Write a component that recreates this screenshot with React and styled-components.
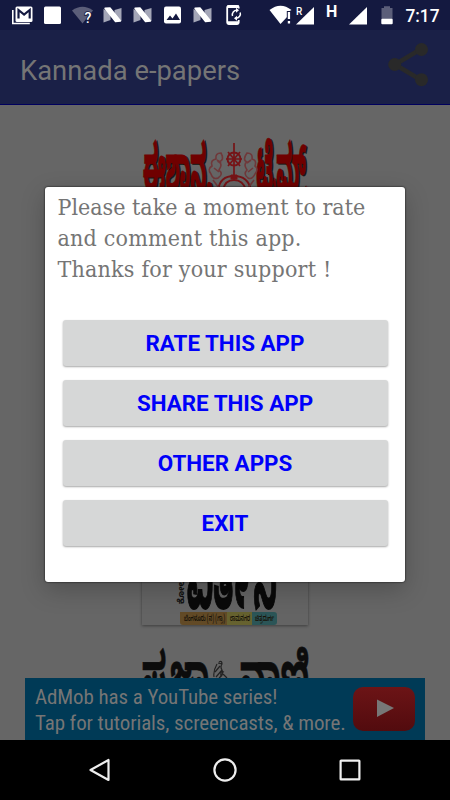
import React from 'react'
import styled, { createGlobalStyle } from 'styled-components';

const GlobalStyle = createGlobalStyle`
    * {
      box-sizing:border-box;
    }
    body {
      margin:0;
      background:#000;
      overflow:hidden;
    }
`

const actions = ['Rate this app', 'Share this app', 'Other apps', 'Exit']

function StatusBar() {
  return (
    <Status>
      <svg width="450" height="30" viewBox="0 0 450 30">
        <path d="M12.800 10v13.500h17" fill="none" stroke="#fff" strokeWidth="1.6" />
        <rect x="15.500" y="6.500" width="17" height="15.500" rx="1.500" fill="#fff" />
        <path d="M18.500 18.500v-8.500l5.600 4.500 5.600-4.500v8.500" fill="none" stroke="#141940" strokeWidth="2.200" />
        <rect x="44" y="6.500" width="17" height="17.500" rx="1.500" fill="#fff" />
        <path d="M72 10.500q10.500-7.500 21 0L82.500 23.500z" fill="#5b5e79" />
        <text x="84.500" y="22.800" fontFamily="Roboto" fontSize="14" fontWeight="500" fill="#fff" stroke="#141940" strokeWidth="1.600" paintOrder="stroke">?</text>
        {[103, 133, 193].map(x => (
          <g key={x} transform={`translate(${x} 7)`}>
            <path d="M0.500 2l7 4v7l-7 2.500zM11.500 3l7-2v13l-7-3z" fill="#a4a6b7" />
            <path d="M2 1.200l5-0.200 10.500 13-5 0.500z" fill="#fff" stroke="#fff" strokeWidth="1.400" strokeLinejoin="round" />
          </g>
        ))}
        <rect x="164" y="6.500" width="17" height="17" rx="2" fill="#fff" />
        <path d="M166.500 20l3.500-4.500 2.500 3 3.500-5 4 6.500z" fill="#141940" />
        <rect x="227.200" y="6" width="11.500" height="18" rx="1.500" fill="none" stroke="#fff" strokeWidth="1.800" />
        <path d="M227 6.800h12M227 22.500h12" stroke="#fff" strokeWidth="2.500" />
        <rect x="235" y="8.500" width="6" height="11.500" fill="#141940" />
        <path d="M232.500 16a4.500 4.500 0 0 1 4.500-5.800M240.200 12.500a4.500 4.500 0 0 1-4.500 5.800" fill="none" stroke="#fff" strokeWidth="1.500" />
        <path d="M236 7.800l3 2.500-3 2.500zM237 15.800l-3 2.500 3 2.500z" fill="#fff" />
        <path d="M269.500 10q11-8.500 22 0l-3.500 2v4l-7.500 8z" fill="#fff" />
        <path d="M286.800 11h4v13h-4z" fill="#141940" />
        <path d="M287.800 12h2.300v7h-2.300zM287.800 21h2.300v2.600h-2.300z" fill="#fff" />
        <path d="M314 7v17.500h-18z" fill="#fff" />
        <path d="M295 5h8.500v11h-8.500z" fill="#141940" />
        <text x="296" y="14.800" fontFamily="Roboto" fontSize="10" fontWeight="500" fill="#fff">R</text>
        <path d="M367 7v17.500h-18z" fill="#fff" />
        <text x="326" y="17" fontFamily="Roboto" fontSize="16" fontWeight="700" fill="#fff">H</text>
        <path d="M384 6.300v1.700h-2.500v11h11v-11h-2.500v-1.700z" fill="#5b5e79" />
        <rect x="381.300" y="18.800" width="11.400" height="5.500" rx="1" fill="#fff" />
        <text x="405.500" y="22" fontFamily="Roboto" fontSize="19" fontWeight="500" fill="#fff" textLength="34" lengthAdjust="spacingAndGlyphs">7:17</text>
      </svg>
    </Status>
  )
}

function Emblem() {
  return (
    <g fill="none" stroke="#761417">
      <circle cx="234" cy="159" r="6.500" strokeWidth="2" />
      <path d="M234 143v32M226 159h16M228 152l12 14M240 152l-12 14" strokeWidth="1.700" />
      <path d="M231 175h6v4h-6z" fill="#761417" />
      <path d="M218 190q2-14 16-14t17 14M223 190q2-10 11-10t12 10" strokeWidth="1.800" />
      <g stroke="#70383a" strokeWidth="1.600">
        <path d="M221 153q-6 0-5 6-6 1-4 7-5 3-1 8 2 6 7 4 6-4 1-8 4-6 0-8 6-2 2-9zM214 168l5 4M217 160l4 3M213 180l6 8" />
        <path d="M247 153q6 0 5 6 5 1 3 7 4 3 0 8-3 6-7 4-5-4-1-8-4-6 0-8-5-2 0-9zM253 168l-5 4M251 160l-4 3M254 180l-6 8" />
      </g>
    </g>
  )
}

function Papers() {
  return (
    <Content>
      <svg width="450" height="573" viewBox="0 105 450 573">
        <g fontSize="46" fontWeight="700">
          {['#151515', '#700000'].map((color, i) => (
            <g key={color} fill={color} stroke={color} strokeWidth="0.6" transform={`translate(${1.500 - i * 1.500} ${1 - i}) translate(0 191) scale(1 1.42)`}>
              <Kannada x="143" y="0" textLength="69" lengthAdjust="spacingAndGlyphs">ಈಶಾನ್ಯ</Kannada>
              <Kannada x="256" y="0" textLength="51" lengthAdjust="spacingAndGlyphs">ಟೈಮ್ಸ್</Kannada>
            </g>
          ))}
        </g>
        <Emblem />

        <Card x="142" y="560" width="166" height="65" />
        <g transform="translate(187 608) scale(1 1.8)" fontSize="46" fontWeight="700" fill="#090909" stroke="#090909">
          <Kannada textLength="90" lengthAdjust="spacingAndGlyphs">ವಿತ೯ನಿ</Kannada>
        </g>
        <Kannada transform="translate(184 604) rotate(-90)" fontSize="9" fontWeight="700" fill="#111">ಕೋಲಾರ</Kannada>
        <path d="M180 612h47v13h-44q-3 0-3-3z" fill="#624a26" />
        <path d="M227 612h25v13h-25z" fill="#66622f" />
        <path d="M252 612h22q3 0 3 3v7q0 3-3 3h-22z" fill="#2b5557" />
        <g fontSize="8" fontWeight="600" fill="#171208">
          <Kannada x="184" y="621" textLength="41" lengthAdjust="spacingAndGlyphs">ಬೆಂಗಳೂರು (ನ) (ಗ್ರಾ)</Kannada>
          <Kannada x="230" y="621" textLength="20" lengthAdjust="spacingAndGlyphs">ರಾಮನಗರ</Kannada>
          <Kannada x="255" y="621" textLength="19" lengthAdjust="spacingAndGlyphs">ಚಿತ್ರದುರ್ಗ</Kannada>
        </g>

        <g transform="translate(0 696) scale(1 1.32)" fontSize="46" fontWeight="700" fill="#0c0c0c" stroke="#0c0c0c" strokeWidth="0.5">
          <Kannada x="142" y="0" textLength="67" lengthAdjust="spacingAndGlyphs">ಪ್ರಜಾ</Kannada>
          <Kannada x="240" y="0" textLength="69" lengthAdjust="spacingAndGlyphs">ವಾಣಿ</Kannada>
        </g>
        <path d="M219 662q3-2 3 2-2 3 0 6 2 5-3 8M217 664q-4 7-3 13M215 672l5-6M216 677l6-7M224 672q-4-2-3 5M223 674l4 4M218 663l4 1" fill="none" stroke="#222" strokeWidth="1.200" />
      </svg>
    </Content>
  )
}

function App() {
  return (
    <Phone>
      <GlobalStyle />
      <StatusBar />
      <Toolbar>
        <Title>Kannada e-papers</Title>
        <svg width="44" height="46" viewBox="0 0 44 46">
          <path d="M35 8L9 23.500 35 39" fill="none" stroke="#292929" strokeWidth="4.500" />
          <circle cx="35.500" cy="8.500" r="6.500" fill="#292929" />
          <circle cx="8.700" cy="23.500" r="6.500" fill="#292929" />
          <circle cx="35.500" cy="38.700" r="6.500" fill="#292929" />
        </svg>
      </Toolbar>
      <Papers />
      <Dialog>
        <Message>
          <Line>Please take a moment to rate</Line>
          <Line $spacing="0.19px">and comment this app.</Line>
          <Line $spacing="0.2px">Thanks for your support !</Line>
        </Message>
        <ButtonGroup>
          {actions.map(label => <Button key={label}>{label}</Button>)}
        </ButtonGroup>
      </Dialog>
      <Ad>
        <AdText>
          <AdLine $spacing="-0.1px">AdMob has a YouTube series!</AdLine>
          <AdLine $spacing="-0.1px">Tap for tutorials, screencasts, &amp; more.</AdLine>
        </AdText>
        <Play>
          <svg width="62" height="44" viewBox="0 0 62 44">
            <path d="M24 12.500l17 8.500-17 9z" fill="#777" />
          </svg>
        </Play>
      </Ad>
      <NavBar>
        <svg width="24" height="26" viewBox="0 0 24 26"><path d="M20.500 3v20L2.500 13z" fill="none" stroke="#eee" strokeWidth="2.200" strokeLinejoin="round" /></svg>
        <svg width="24" height="26" viewBox="0 0 24 26"><circle cx="12" cy="13" r="10.600" fill="none" stroke="#eee" strokeWidth="2.200" /></svg>
        <svg width="24" height="26" viewBox="0 0 24 26"><rect x="2.600" y="3.600" width="18.800" height="18.800" rx="0.500" fill="none" stroke="#eee" strokeWidth="2.200" /></svg>
      </NavBar>
    </Phone>
  )
}

export default App

const Phone = styled.div`
    position:relative;
    width:450px;
    height:800px;
    display:flex;
    flex-direction:column;
    background:#666;
    font-family:Roboto, sans-serif;
    svg {
      display:block;
    }
`
const Status = styled.div`
    height:30px;
    background:#141940;
`
const Toolbar = styled.div`
    height:75px;
    padding:11px 20px 0 20px;
    display:flex;
    justify-content:space-between;
    background:#1a2047;
    border-bottom:1px solid #00005e;
`
const Title = styled.div`
    padding-top:14px;
    font-size:27.4px;
    line-height:32px;
    color:#757575;
`
const Content = styled.div`
    height:573px;
    overflow:hidden;
`
const Card = styled.rect`
    fill:#646464;
    filter:drop-shadow(0 1px 1.5px rgba(0,0,0,0.4));
`
const Kannada = styled.text`
    font-family:'Noto Sans Kannada', 'Noto Sans', sans-serif;
`
const Dialog = styled.div`
    position:absolute;
    left:45px;
    top:187px;
    width:360px;
    height:395px;
    background:#fff;
    border-radius:3px;
    box-shadow:0 0 2px #000, 0 8px 24px rgba(0,0,0,0.22);
`
const Message = styled.div`
    padding:5px 12px 0 12.5px;
    height:129px;
    font-family:'DejaVu Serif Condensed', 'DejaVu Serif', serif;
    font-size:23px;
    line-height:31px;
    color:#757575;
`
const Line = styled.div`
    white-space:nowrap;
    letter-spacing:${props=>props.$spacing || 'normal'};
`
const ButtonGroup = styled.div`
    padding:4px 17.5px;
    display:flex;
    flex-direction:column;
    gap:14px;
`
const Button = styled.button`
    height:46px;
    padding:0;
    border:0;
    border-radius:3px;
    background:#d6d7d7;
    box-shadow:0 1px 2px rgba(0,0,0,0.35);
    color:#0000fa;
    font-family:Roboto, sans-serif;
    font-size:22.4px;
    font-weight:700;
    text-transform:uppercase;
`
const Ad = styled.div`
    width:400px;
    height:62px;
    margin:0 25px;
    padding:6px 10px;
    display:flex;
    justify-content:space-between;
    background:#003a56;
`
const AdText = styled.div`
    width:310px;
    display:flex;
    flex-direction:column;
    font-family:'Roboto Condensed', Roboto, sans-serif;
    font-size:21px;
    line-height:26px;
    font-stretch:condensed;
    white-space:nowrap;
    color:#757575;
`
const AdLine = styled.span`
    letter-spacing:${props=>props.$spacing};
`
const Play = styled.div`
    width:62px;
    height:44px;
    margin-top:3px;
    border-radius:10px;
    background:linear-gradient(#6c1416, #520b0e);
`
const NavBar = styled.div`
    height:60px;
    padding:17px 88px 0 88px;
    display:flex;
    justify-content:space-between;
    background:#000;
`
